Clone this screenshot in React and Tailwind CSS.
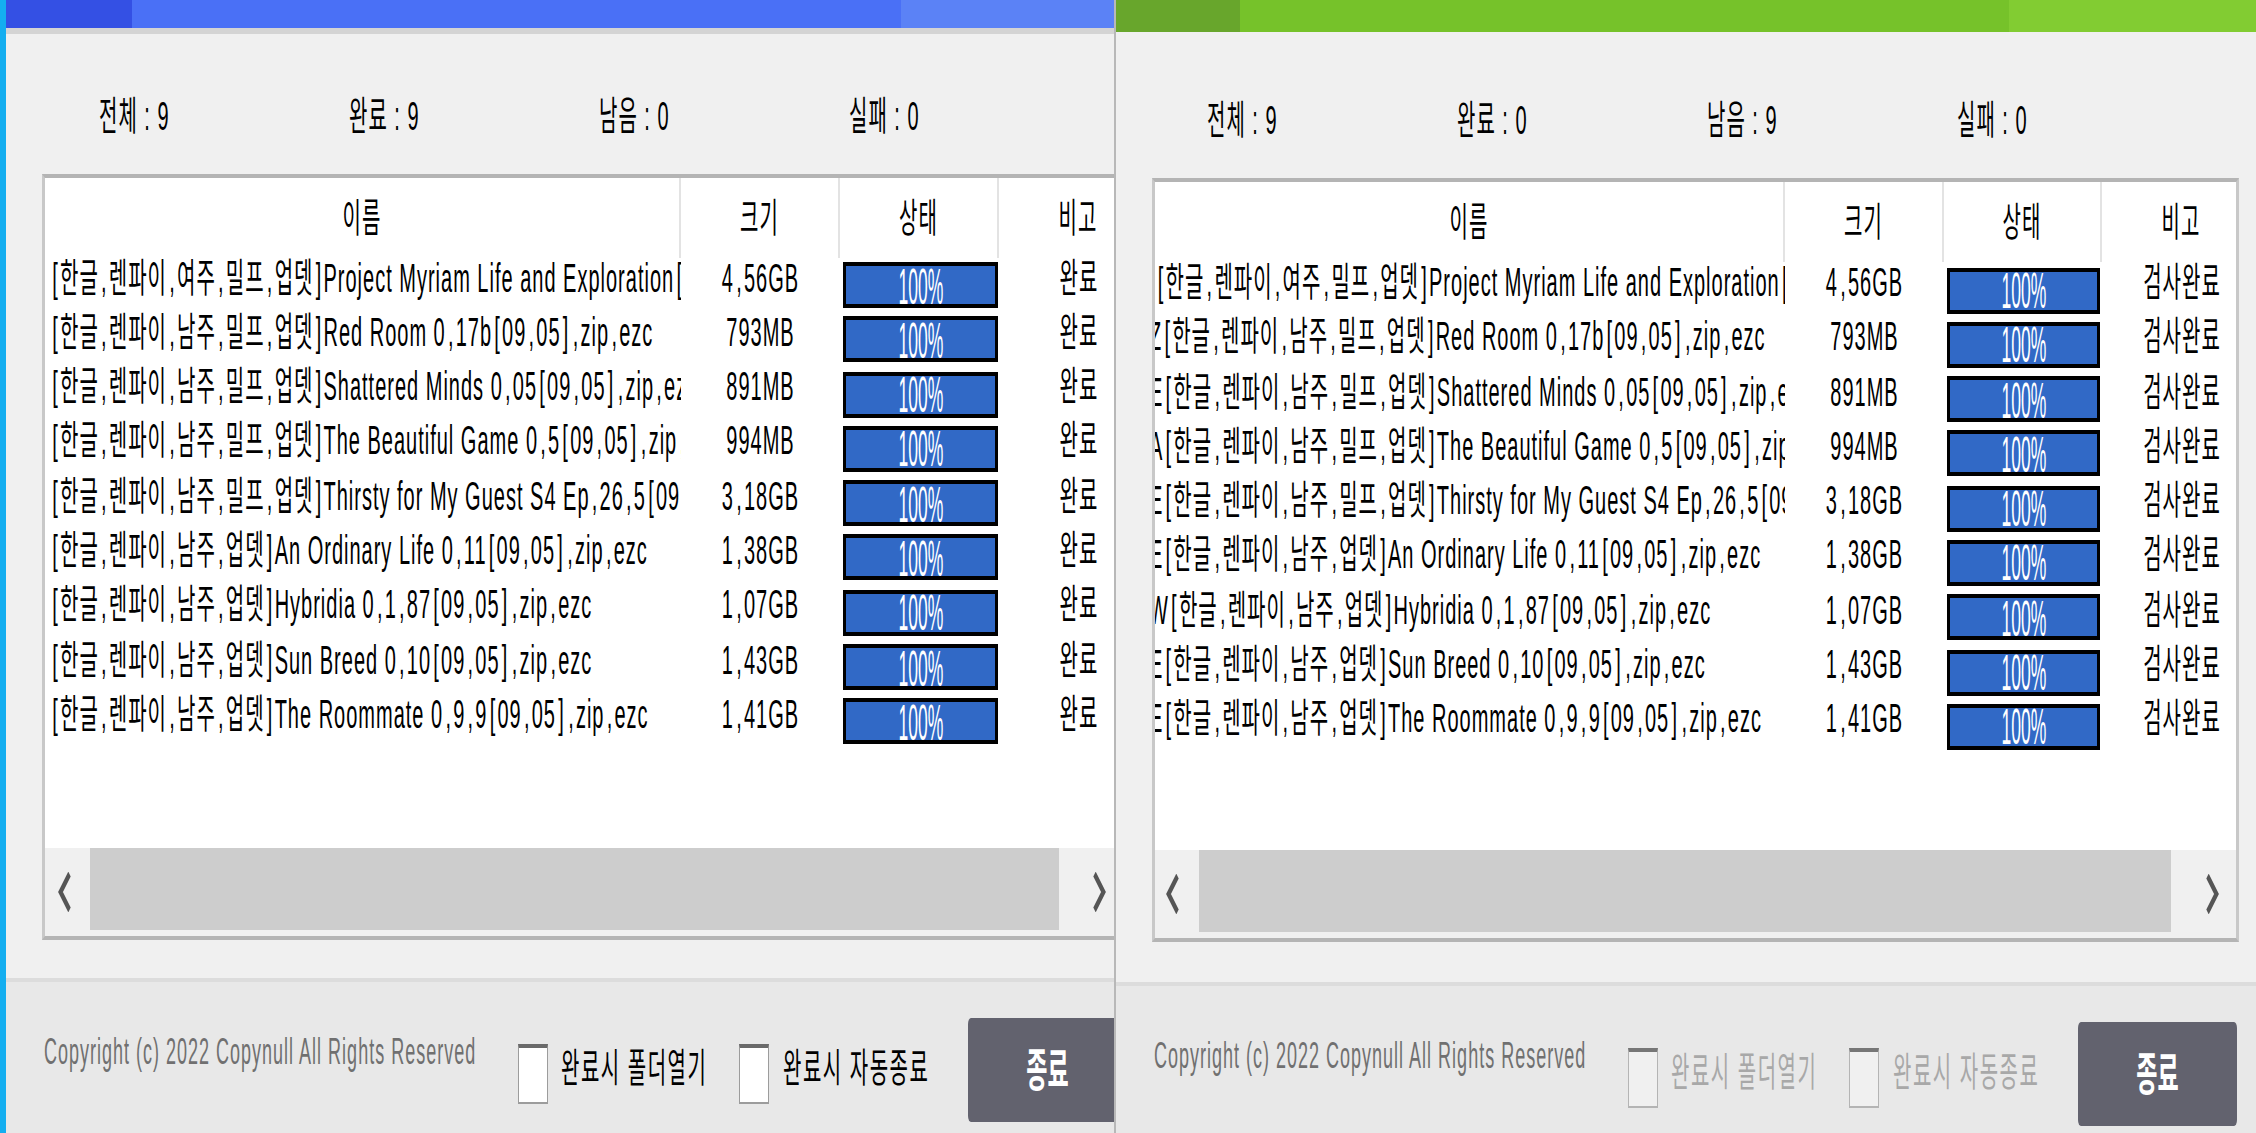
import React from "react";

const rows = [
  { n: "[한글,렌파이,여주,밀프,업뎃]Project Myriam Life and Exploration[09,05],zip,ezc", s: "4,56GB", p: "I" },
  { n: "[한글,렌파이,남주,밀프,업뎃]Red Room 0,17b[09,05],zip,ezc", s: "793MB", p: "Z" },
  { n: "[한글,렌파이,남주,밀프,업뎃]Shattered Minds 0,05[09,05],zip,ezc", s: "891MB", p: "E" },
  { n: "[한글,렌파이,남주,밀프,업뎃]The Beautiful Game 0,5[09,05],zip,ezc", s: "994MB", p: "A" },
  { n: "[한글,렌파이,남주,밀프,업뎃]Thirsty for My Guest S4 Ep,26,5[09,05],zip,ezc", s: "3,18GB", p: "E" },
  { n: "[한글,렌파이,남주,업뎃]An Ordinary Life 0,11[09,05],zip,ezc", s: "1,38GB", p: "E" },
  { n: "[한글,렌파이,남주,업뎃]Hybridia 0,1,87[09,05],zip,ezc", s: "1,07GB", p: "W" },
  { n: "[한글,렌파이,남주,업뎃]Sun Breed 0,10[09,05],zip,ezc", s: "1,43GB", p: "E" },
  { n: "[한글,렌파이,남주,업뎃]The Roommate 0,9,9[09,05],zip,ezc", s: "1,41GB", p: "E" },
];

function T({ text }) {
  const parts = text.split(/([,\[\]])/);
  return (
    <>
      {parts.map((p, i) =>
        p === "," || p === "[" || p === "]" ? (
          <span key={i} className="inline-block w-[10px] text-center tracking-normal">
            {p}
          </span>
        ) : (
          <React.Fragment key={i}>{p}</React.Fragment>
        )
      )}
    </>
  );
}

function Chevron({ dir }) {
  return (
    <svg width="15" height="20" viewBox="0 0 15 20" className="block">
      <path
        d={dir === "left" ? "M12.5 1 L3.5 10 L12.5 19" : "M2.5 1 L11.5 10 L2.5 19"}
        stroke="#555555"
        strokeWidth="3.4"
        fill="none"
      />
    </svg>
  );
}

function Checkbox({ disabled }) {
  return (
    <div
      className={
        disabled
          ? "mt-[30.5px] h-[30px] w-[30px] shrink-0 border border-[#b4b4b4] border-t-2 border-t-[#767676] bg-[#f0f0f0]"
          : "mt-[30.5px] h-[30px] w-[30px] shrink-0 border border-[#9c9c9c] border-t-2 border-t-[#6a6a6a] bg-white"
      }
    />
  );
}

function Panel({ right }) {
  const stats = right
    ? ["전체 : 9", "완료 : 0", "남음 : 9", "실패 : 0"]
    : ["전체 : 9", "완료 : 9", "남음 : 0", "실패 : 0"];
  const nameW = right ? "w-[630px]" : "w-[636px]";
  return (
    <div
      className={
        right
          ? "h-full w-[1140px] shrink-0 overflow-hidden bg-[#f0f0f0]"
          : "h-full w-[1116px] shrink-0 overflow-hidden border-l-[6px] border-r-2 border-l-[#14aef0] border-r-[#b8b8b8] bg-[#f0f0f0]"
      }
    >
      <div className="flex h-full w-[1140px] flex-col">
        {right ? (
          <div className="flex h-[15.5px] shrink-0">
            <div className="w-[124px] bg-[#68a62c]" />
            <div className="w-[769px] bg-[#76c22a]" />
            <div className="flex-1 bg-[#82cc32]" />
          </div>
        ) : (
          <>
            <div className="flex h-[13.5px] shrink-0">
              <div className="w-[126px] bg-[#3450e4]" />
              <div className="w-[769px] bg-[#4a70f6]" />
              <div className="flex-1 bg-[#5b82f6]" />
            </div>
            <div className="h-[3px] shrink-0 bg-[#d4d4d4]" />
          </>
        )}

        {/* stats */}
        <div
          className={
            right
              ? "flex shrink-0 pl-[91px] pt-[34.5px]"
              : "flex shrink-0 pl-[93px] pt-[31.5px]"
          }
        >
          {stats.map((s) => (
            <div key={s} className="h-[20px] w-[250px] whitespace-nowrap text-[20px] leading-[20px] tracking-[1px]">
              {s}
            </div>
          ))}
        </div>

        {/* table */}
        <div
          className={
            right
              ? "ml-[36px] mt-[19px] flex h-[382px] w-[1087px] shrink-0 flex-col overflow-hidden border-x-[3px] border-y-2 border-x-[#c8c8c8] border-y-[#b4b4b4] bg-white"
              : "ml-[36px] mt-[18.5px] flex h-[383.5px] w-[1087px] shrink-0 flex-col overflow-hidden border-x-[3px] border-y-2 border-x-[#c8c8c8] border-y-[#b4b4b4] bg-white"
          }
        >
          <div className="flex h-[40px] shrink-0 text-[20px] tracking-[1px]">
            <div className={`${nameW} flex shrink-0 items-center justify-center border-r-2 border-[#e3e3e3]`}>이름</div>
            <div className="flex w-[159px] shrink-0 items-center justify-center border-r-2 border-[#e3e3e3]">크기</div>
            <div className={`${right ? "w-[158px]" : "w-[159px]"} flex shrink-0 items-center justify-center border-r-2 border-[#e3e3e3]`}>상태</div>
            <div className="flex w-[160px] shrink-0 items-center justify-center border-r-2 border-[#e3e3e3]">비고</div>
          </div>

          {rows.map((r, i) => (
            <div key={i} className="flex h-[27.3px] shrink-0 text-[20px] leading-[20px] tracking-[1px]">
              <div className={`${nameW} shrink-0 overflow-hidden whitespace-nowrap ${right ? "pl-0" : "pl-[5px]"}`}>
                {right && <span className="-ml-[6px] inline-block">{r.p}</span>}
                <T text={r.n} />
              </div>
              <div className="w-[159px] shrink-0 whitespace-nowrap text-center">
                <T text={r.s} />
              </div>
              <div className={`${right ? "w-[158px] pl-[3px] pr-[2px]" : "w-[159px] pl-[3px] pr-px"} shrink-0 pt-[2.5px]`}>
                <div className="flex h-[23px] items-center justify-center overflow-hidden border-x-[3px] border-y-2 border-black bg-[#3169c6] text-white">
                  <span className="inline-block text-[25px] leading-[20px] tracking-normal [transform:scaleX(0.7)]">100%</span>
                </div>
              </div>
              <div className="w-[160px] shrink-0 whitespace-nowrap text-center">{right ? "검사완료" : "완료"}</div>
            </div>
          ))}

          <div className="flex-1" />

          {/* horizontal scrollbar */}
          <div className="flex h-[44px] shrink-0 bg-[#f0f0f0]">
            <div className={`${right ? "w-[44px] pl-[10px]" : "w-[45px] pl-[12px]"} flex shrink-0 items-center`}>
              <Chevron dir="left" />
            </div>
            <div className={`${right ? "w-[972px]" : "w-[969px]"} h-[41px] shrink-0 bg-[#cdcdcd]`} />
            <div className={`${right ? "pl-[34px]" : "pl-[33px]"} flex flex-1 items-center`}>
              <Chevron dir="right" />
            </div>
          </div>
        </div>

        {/* footer */}
        <div className={`${right ? "mt-[20px]" : "mt-[19px]"} flex flex-1 items-start border-t-2 border-[#dcdcdc] bg-[#e8e8e8] pl-[38px]`}>
          <div className="mt-[25px] w-[474px] shrink-0 whitespace-nowrap text-[18px] leading-[20px] tracking-[1px] text-[#707070]">
            Copyright (c) 2022 Copynull All Rights Reserved
          </div>
          <Checkbox disabled={right} />
          <div
            className={`ml-[13px] mt-[32.75px] w-[178px] shrink-0 whitespace-nowrap text-[20px] leading-[20px] tracking-[1.5px] ${
              right ? "text-[#a8a8a8]" : "text-black"
            }`}
          >
            완료시 폴더열기
          </div>
          <Checkbox disabled={right} />
          <div
            className={`ml-[14px] mt-[32.75px] w-[185px] shrink-0 whitespace-nowrap text-[20px] leading-[20px] tracking-[1.5px] ${
              right ? "text-[#a8a8a8]" : "text-black"
            }`}
          >
            완료시 자동종료
          </div>
          <div className="mt-[18px] flex h-[51.5px] w-[159px] shrink-0 items-center justify-center rounded-[3px] bg-[#62626e] text-[23px] font-bold text-white">
            종료
          </div>
        </div>
      </div>
    </div>
  );
}

export default function App() {
  return (
    <div className="h-[1133px] w-[2256px] overflow-hidden bg-[#f0f0f0] font-['Liberation_Sans','Noto_Sans_CJK_KR',sans-serif] text-black">
      <div className="flex h-[566.5px] w-[2256px] origin-top-left [transform:scaleY(2)]">
        <Panel />
        <Panel right />
      </div>
    </div>
  );
}
